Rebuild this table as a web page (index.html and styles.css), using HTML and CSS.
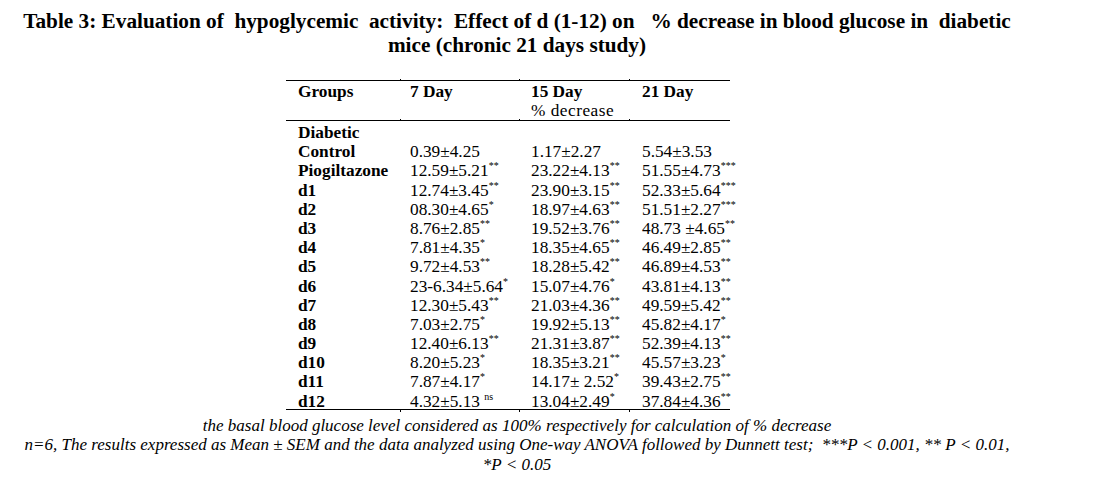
FILE: index.html
```html
<!DOCTYPE html>
<html>
<head>
<meta charset="utf-8">
<link rel="stylesheet" href="styles.css">
</head>
<body>
<div class="page">
  <h1 class="title">Table 3: Evaluation of&nbsp; hypoglycemic&nbsp; activity:&nbsp; Effect of d (1-12) on &nbsp; % decrease in blood glucose in&nbsp; diabetic<br>mice (chronic 21 days study)</h1>

  <div class="table">
    <div class="head">
      <div class="cell c1 b">Groups</div>
      <div class="cell c2 b tick">7 Day</div>
      <div class="cell c3 tick"><span class="b">15 Day</span><br><span class="sub">% decrease</span></div>
      <div class="cell c4 b tick">21 Day</div>
    </div>
    <div class="body">
      <div class="row"><div class="cell c1 b">Diabetic</div><div class="cell c2"></div><div class="cell c3"></div><div class="cell c4"></div></div>
      <div class="row"><div class="cell c1 b">Control</div><div class="cell c2">0.39±4.25</div><div class="cell c3">1.17±2.27</div><div class="cell c4">5.54±3.53</div></div>
      <div class="row"><div class="cell c1 b">Piogiltazone</div><div class="cell c2">12.59±5.21<sup>**</sup></div><div class="cell c3">23.22±4.13<sup>**</sup></div><div class="cell c4">51.55±4.73<sup>***</sup></div></div>
      <div class="row"><div class="cell c1 b">d1</div><div class="cell c2">12.74±3.45<sup>**</sup></div><div class="cell c3">23.90±3.15<sup>**</sup></div><div class="cell c4">52.33±5.64<sup>***</sup></div></div>
      <div class="row"><div class="cell c1 b">d2</div><div class="cell c2">08.30±4.65<sup>*</sup></div><div class="cell c3">18.97±4.63<sup>**</sup></div><div class="cell c4">51.51±2.27<sup>***</sup></div></div>
      <div class="row"><div class="cell c1 b">d3</div><div class="cell c2">8.76±2.85<sup>**</sup></div><div class="cell c3">19.52±3.76<sup>**</sup></div><div class="cell c4">48.73 ±4.65<sup>**</sup></div></div>
      <div class="row"><div class="cell c1 b">d4</div><div class="cell c2">7.81±4.35<sup>*</sup></div><div class="cell c3">18.35±4.65<sup>**</sup></div><div class="cell c4">46.49±2.85<sup>**</sup></div></div>
      <div class="row"><div class="cell c1 b">d5</div><div class="cell c2">9.72±4.53<sup>**</sup></div><div class="cell c3">18.28±5.42<sup>**</sup></div><div class="cell c4">46.89±4.53<sup>**</sup></div></div>
      <div class="row"><div class="cell c1 b">d6</div><div class="cell c2">23-6.34±5.64<sup>*</sup></div><div class="cell c3">15.07±4.76<sup>*</sup></div><div class="cell c4">43.81±4.13<sup>**</sup></div></div>
      <div class="row"><div class="cell c1 b">d7</div><div class="cell c2">12.30±5.43<sup>**</sup></div><div class="cell c3">21.03±4.36<sup>**</sup></div><div class="cell c4">49.59±5.42<sup>**</sup></div></div>
      <div class="row"><div class="cell c1 b">d8</div><div class="cell c2">7.03±2.75<sup>*</sup></div><div class="cell c3">19.92±5.13<sup>**</sup></div><div class="cell c4">45.82±4.17<sup>*</sup></div></div>
      <div class="row"><div class="cell c1 b">d9</div><div class="cell c2">12.40±6.13<sup>**</sup></div><div class="cell c3">21.31±3.87<sup>**</sup></div><div class="cell c4">52.39±4.13<sup>**</sup></div></div>
      <div class="row"><div class="cell c1 b">d10</div><div class="cell c2">8.20±5.23<sup>*</sup></div><div class="cell c3">18.35±3.21<sup>**</sup></div><div class="cell c4">45.57±3.23<sup>*</sup></div></div>
      <div class="row"><div class="cell c1 b">d11</div><div class="cell c2">7.87±4.17<sup>*</sup></div><div class="cell c3">14.17± 2.52<sup>*</sup></div><div class="cell c4">39.43±2.75<sup>**</sup></div></div>
      <div class="row last"><div class="cell c1 b">d12</div><div class="cell c2 tick-b">4.32±5.13 <sup class="ns">ns</sup></div><div class="cell c3 tick-b">13.04±2.49<sup>*</sup></div><div class="cell c4 tick-b">37.84±4.36<sup>**</sup></div></div>
    </div>
  </div>

  <p class="notes">the basal blood glucose level considered as 100% respectively for calculation of % decrease<br>n=6, The results expressed as Mean ± SEM and the data analyzed using One-way ANOVA followed by Dunnett test;&nbsp; ***P &lt; 0.001, ** P &lt; 0.01,<br>*P &lt; 0.05</p>
</div>
</body>
</html>
```

FILE: styles.css
```css
html, body {
  margin: 0;
  padding: 0;
  background: #ffffff;
  color: #000000;
}

.page {
  width: 988px;
  margin-left: 23px;
  font-family: "Liberation Serif", "Times New Roman", serif;
}

.title {
  margin: 0;
  padding-top: 9px;
  font-size: 21.25px;
  line-height: 24px;
  font-weight: bold;
  text-align: center;
}

.table {
  width: 444px;
  margin-left: 263px;
  margin-top: 23px;
  font-size: 17.3px;
  line-height: 19.2px;
  border-top: 1px solid #000;
  border-bottom: 1px solid #000;
}

.head {
  display: grid;
  grid-template-columns: 114px 119px 110px 101px;
  padding: 1px 0 0;
  height: 38px;
  border-bottom: 1px solid #000;
}

.body {
  padding-top: 2px;
}

.row {
  display: grid;
  grid-template-columns: 114px 119px 110px 101px;
  height: 19.2px;
}

.row.last {
  height: 17px;
}

.cell {
  position: relative;
  white-space: nowrap;
}

.c1 { padding-left: 12px; }
.c2 { padding-left: 10px; }
.c3 { padding-left: 12px; }
.c4 { padding-left: 13px; }

.b {
  font-weight: bold;
}

.sub {
  letter-spacing: 0.5px;
}

/* small cell-boundary marks on the rules */
.tick::before,
.tick::after,
.tick-b::after {
  content: "";
  position: absolute;
  left: 0;
  width: 1px;
  height: 2px;
  background: #000;
}

.tick::before {
  top: -3px;
}

.tick::after {
  bottom: -1px;
}

.tick-b::after {
  bottom: -1px;
}

sup {
  font-size: 10px;
  line-height: 0;
  vertical-align: 7px;
}

sup.ns {
  font-size: 10px;
}

.notes {
  margin: 6px 0 0;
  font-style: italic;
  font-size: 17px;
  line-height: 19.7px;
  text-align: center;
}
```
